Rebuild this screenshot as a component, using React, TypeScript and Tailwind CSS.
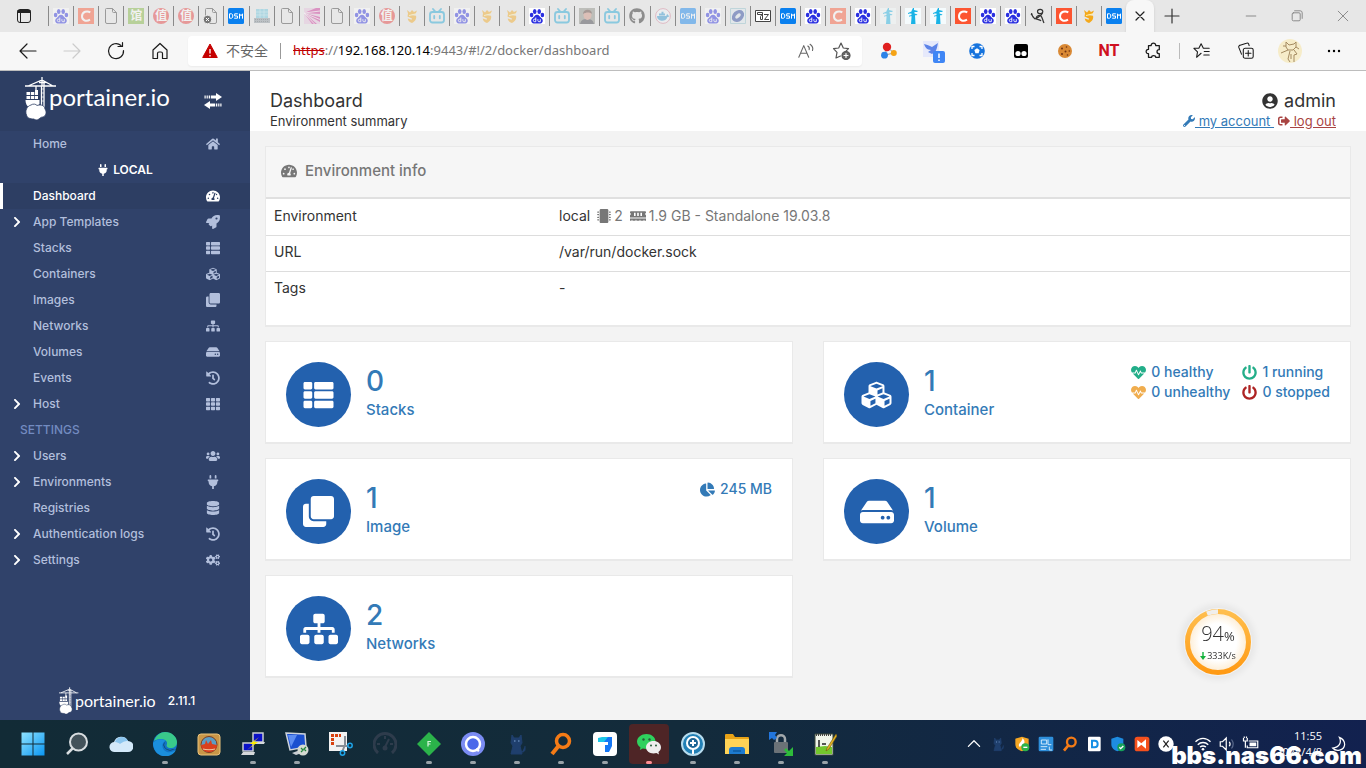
import { ReactNode } from "react";
import {
  FaChartPie,
  FaChevronRight,
  FaClone,
  FaCogs,
  FaCubes,
  FaDatabase,
  FaGithub,
  FaHdd,
  FaHeartbeat,
  FaHistory,
  FaHome,
  FaMemory,
  FaMicrochip,
  FaPlug,
  FaPowerOff,
  FaRocket,
  FaSignOutAlt,
  FaSitemap,
  FaTachometerAlt,
  FaTh,
  FaThList,
  FaUserCircle,
  FaUsers,
  FaWrench,
} from "react-icons/fa";

/* ---------- favicons ---------- */

function Paw() {
  return (
    <svg viewBox="0 0 16 16" className="h-4 w-4 bg-white">
      <g fill="#2a2fe0">
        <ellipse cx="2.6" cy="7" rx="1.8" ry="2.3" />
        <ellipse cx="5.7" cy="3.4" rx="1.8" ry="2.5" />
        <ellipse cx="10.2" cy="3.4" rx="1.8" ry="2.5" />
        <ellipse cx="13.4" cy="7" rx="1.8" ry="2.3" />
        <path d="M8 6.8c2.200 0 2.800 2 4.200 3.100 1.500 1.100 1.900 2.400 1.400 3.900-.6 1.700-2.500 2-5.600 1.700-3.100.3-5 0-5.600-1.700-.5-1.500-.1-2.800 1.400-3.900C5.200 8.800 5.800 6.800 8 6.800z" />
      </g>
      <path
        d="M6.800 9.500v4.200H5.600a1.200 1.200 0 0 1 0-2.500h1.200M8.900 11.200v1.500c0 .8.500 1 1 1h1.400v-2.500"
        fill="none"
        stroke="#fff"
        strokeWidth=".9"
      />
    </svg>
  );
}

function Csdn() {
  return (
    <span className="grid h-4 w-4 place-items-center bg-[#fc5531]">
      <svg viewBox="0 0 16 16" className="h-4 w-4" fill="none" stroke="#fff" strokeWidth="2">
        <path d="M12.300 4.400C9.500 2.600 4.200 3.200 4 8.100c-.1 4.800 4.600 5.600 8 3.600" />
      </svg>
    </span>
  );
}

function Doc({ broken }: { broken?: boolean }) {
  return (
    <svg viewBox="0 0 16 16" className="h-4 w-4" fill="none" stroke="#9a9a9a">
      <path d="M3.500.5h6l4 4.200v9.300a1.500 1.500 0 0 1-1.500 1.500H4A1.500 1.500 0 0 1 2.500 14V1.500a1 1 0 0 1 1-1z" />
      <path d="M9.500.5v3a1 1 0 0 0 1 1h3" />
      {broken && (
        <>
          <circle cx="4.500" cy="11.500" r="4.200" fill="#777" stroke="#e7e7e7" />
          <path d="M3 10l3 3M6 10l-3 3" stroke="#fff" />
        </>
      )}
    </svg>
  );
}

function Guan() {
  return (
    <span className="grid h-4 w-4 place-items-center bg-[#7fb53c] text-xs leading-4 font-bold text-white">
      馆
    </span>
  );
}

function Zhi() {
  return (
    <span className="grid h-4 w-4 place-items-center rounded-full bg-[#e63a3a] text-xs leading-4 font-bold text-white">
      值
    </span>
  );
}

function Dsm() {
  return (
    <svg viewBox="0 0 16 16" className="h-4 w-4" fill="none" stroke="#fff">
      <rect width="16" height="16" rx="1.500" fill="#0a80ef" stroke="none" />
      <path d="M1.500 5.800h2.200l1 1v2.400l-1 1H1.500zM9.800 5.800H6.700V8h2.800v2.200H6.200M11.500 10.700V5.800l1.500 2 1.500-2v4.900" />
    </svg>
  );
}

function Server() {
  return (
    <svg viewBox="0 0 16 16" className="h-4 w-4">
      <path d="M2 1h12v9H2z" fill="#6cc4dd" />
      <path d="M2 4h12M2 7h12M6 1v9M10 1v9" stroke="#c6edf5" strokeWidth=".6" />
      <path d="M0 10h16v5H0z" fill="#8a949c" />
      <path d="M1 11.500h14M1 13.500h14" stroke="#59636b" strokeDasharray="1 1" />
    </svg>
  );
}

function Fan() {
  return (
    <svg viewBox="0 0 16 16" className="h-4 w-4">
      <path d="M0 0h16v16H0z" fill="#e6c3dd" />
      <path d="M0 5L12 0h4v6L0 5zM0 5l16 4v5L0 5zM0 5l13 11H8L0 5z" fill="#cc2f97" />
      <path d="M0 5L16 3M0 5l16 6.500M0 5l10.500 11" stroke="#fff" strokeWidth=".8" />
    </svg>
  );
}

function Gold() {
  return (
    <svg viewBox="0 0 16 16" className="h-4 w-4" fill="#f4a91c">
      <path d="M3 2l3 2.500L8 2l2 2 3-1.500-1.500 3.500L6.800 7l5.200.8C13 11 10.500 14 8 15c-2.500-.7-4.200-2.500-4.200-4.500l3.800 1.300L8 10.500 3.500 8.600 4 5.500z" />
      <path d="M5 7.500l7-1.700" stroke="#fff3b0" />
    </svg>
  );
}

function Bili() {
  return (
    <svg viewBox="0 0 16 16" className="h-4 w-4" fill="none" stroke="#1aa5d6" strokeWidth="1.800">
      <rect x="1" y="4" width="14" height="10.500" rx="2.500" />
      <path d="M4 1l2.500 2.800M12 1L9.500 3.800M5.200 8v2.300M10.800 8v2.300" strokeLinecap="round" />
    </svg>
  );
}

function Photo() {
  return (
    <svg viewBox="0 0 16 16" className="h-4 w-4">
      <path d="M0 0h16v16H0z" fill="#8b8d84" />
      <path d="M1 16c1-4 3-5 7-5s6 1 7 5z" fill="#3b3d44" />
      <ellipse cx="8.500" cy="7" rx="4" ry="5" fill="#cf8f7e" />
      <path d="M4 6c0-5 9-6 9 0-2-2-6-2-9 0z" fill="#5a3e36" />
    </svg>
  );
}

function Whale() {
  return (
    <svg viewBox="0 0 16 16" className="h-4 w-4">
      <circle cx="8" cy="8" r="7.400" fill="#eef5f9" stroke="#d7849b" />
      <path d="M2 8h8.500c1 0 1.500-1 1.400-2 1 .3 1.300 1 1.200 1.600.6 0 1 .1 1.400.4-.5.8-1.400 1-2 1C11.500 12 9 13 6.500 12.800 3.800 12.600 2 10.800 2 8z" fill="#2d95cf" />
      <path d="M4 5.500h6v2H4zM6.500 3.800h2v2h-2z" fill="#2d95cf" />
    </svg>
  );
}

function Planet() {
  return (
    <svg viewBox="0 0 16 16" className="h-4 w-4">
      <path d="M.5.500h15v15H.5z" fill="#dce8ee" stroke="#8fc1cb" />
      <ellipse cx="8" cy="8" rx="5" ry="3.500" transform="rotate(-42 8 8)" fill="none" stroke="#24409c" strokeWidth="3.500" />
    </svg>
  );
}

function SevenZip() {
  return (
    <svg viewBox="0 0 16 16" className="h-4 w-4" fill="none" stroke="#444">
      <path d="M.5 2.500h15v11H.5z" fill="#fff" />
      <path d="M2.500 4.500h5v7h-2v-3l1.500-2H2.500zM9 6.500h4.500L9.500 11.500h4.500" />
    </svg>
  );
}

function Pagoda() {
  return (
    <svg viewBox="0 0 16 16" className="h-4 w-4">
      <path d="M0 0h16v16H0z" fill="#f5fbfd" />
      <path
        d="M8 0h1v2l4 1-1 1H9.500v1.500l3 1-1 .8H10L10.500 16H6l.6-7.700H5l-1 .5v-1L6.500 7V5.500H4.500L3 6V5l3.500-1.500V3z"
        fill="#19b3e6"
      />
    </svg>
  );
}

function Script() {
  return (
    <svg viewBox="0 0 16 16" className="h-4 w-4" fill="none" stroke="#333" strokeWidth="1.200">
      <path d="M1.500 5c.5 3 2 5 3.500 6M5 11C7 10 13 7 12.800 3.500 12.500.5 7.500 1 7.500 3.500c0 2.500 4 3 5.300.5M6 10c1-3 3.500-3 5-2 1.500 1.500 1.500 4 3 7M6 11c2 1 4 0 5 2M1 6l4 5" />
    </svg>
  );
}

const tabs: [() => ReactNode, boolean][] = [
  [Paw, true], [Csdn, true], [Doc, false], [Guan, true], [Zhi, true], [Zhi, true],
  [() => <Doc broken />, false], [Dsm, false], [Server, true], [Doc, false], [Fan, true],
  [Doc, false], [Paw, true], [Zhi, true], [Gold, true], [Bili, true], [Paw, true],
  [Gold, true], [Gold, true], [Paw, false], [Bili, true], [Photo, true], [Bili, true],
  [() => <FaGithub className="h-4 w-4 text-[#222]" />, true], [Whale, true], [Dsm, true],
  [Paw, true], [Planet, true], [SevenZip, false], [Dsm, false], [Paw, false], [Csdn, true],
  [Paw, false], [Pagoda, true], [Pagoda, false], [Pagoda, false], [Csdn, false],
  [Paw, false], [Paw, false], [Script, false], [Csdn, false], [Gold, false], [Dsm, false],
];

/* ---------- browser chrome ---------- */

function Line({ children, className = "h-5 w-5" }: { children: ReactNode; className?: string }) {
  return (
    <svg
      viewBox="0 0 20 20"
      className={className}
      fill="none"
      stroke="currentColor"
      strokeWidth="1.200"
      strokeLinecap="round"
      strokeLinejoin="round"
    >
      {children}
    </svg>
  );
}

function TabStrip() {
  return (
    <div className="flex h-8 items-stretch bg-[#e7e7e7]">
      <button className="grid w-12 shrink-0 place-items-center text-[#222]" aria-label="Tab actions">
        <svg viewBox="0 0 16 16" className="h-4 w-4" fill="none" stroke="currentColor">
          <rect x="1.500" y="1.500" width="13" height="13" rx="2.500" />
          <path d="M1.500 3.500h13M1.500 4.500h13M1.500 2.500h13M4.500 5v9" />
        </svg>
      </button>
      <div className="flex min-w-0 flex-1 items-center">
        {tabs.map(([Icon, faded], i) => (
          <button key={i} className="flex h-5 min-w-0 flex-1 items-center justify-center border-l border-[#8a8a8a]" aria-label="Tab">
            <span className={faded ? "opacity-45" : ""}>
              <Icon />
            </span>
          </button>
        ))}
      </div>
      <button className="grid w-7 shrink-0 place-items-center rounded-t-lg bg-[#f7f7f7] text-[#222] shadow" aria-label="Close tab">
        <Line className="h-4 w-4">
          <path d="M5 5l10 10M15 5L5 15" strokeWidth="1.500" />
        </Line>
      </button>
      <button className="grid w-9 shrink-0 place-items-center text-[#333]" aria-label="New tab">
        <Line>
          <path d="M3 10h14M10 3v14" />
        </Line>
      </button>
      <div className="flex w-44 shrink-0 items-center justify-end text-[#888]">
        <button className="grid w-[46px] place-items-center" aria-label="Minimize">
          <Line className="h-4 w-4"><path d="M4 10h12" /></Line>
        </button>
        <button className="grid w-[46px] place-items-center" aria-label="Restore">
          <Line className="h-4 w-4">
            <rect x="4" y="6" width="10" height="10" rx="1.500" />
            <path d="M7 3.500h7a2.500 2.500 0 0 1 2.500 2.500v7" />
          </Line>
        </button>
        <button className="grid w-[46px] place-items-center" aria-label="Close">
          <Line className="h-4 w-4"><path d="M4 4l12 12M16 4L4 16" /></Line>
        </button>
      </div>
    </div>
  );
}

function ToolButton({ children, label }: { children: ReactNode; label: string }) {
  return (
    <button className="grid w-11 shrink-0 place-items-center" aria-label={label}>
      {children}
    </button>
  );
}

function Toolbar() {
  return (
    <div className="flex h-[39px] items-center border-b border-[#bdbdbd] bg-[#f7f7f7] pr-[10px] pl-[6px] text-[#1b1b1b]">
      <ToolButton label="Back">
        <Line><path d="M18 10H2M9 3l-7 7 7 7" /></Line>
      </ToolButton>
      <ToolButton label="Forward">
        <Line className="h-5 w-5 text-[#ccc]"><path d="M2 10h16M11 3l7 7-7 7" /></Line>
      </ToolButton>
      <ToolButton label="Refresh">
        <Line><path d="M17.500 9.500A7.500 7.500 0 1 1 15 4.500M12 5.500h4.500V1.500" /></Line>
      </ToolButton>
      <ToolButton label="Home">
        <Line>
          <path d="M3 9l7-6.500L17 9v8.500h-4.500v-5a1.500 1.500 0 0 0-1.500-1.500H9a1.500 1.500 0 0 0-1.500 1.500v5H3z" />
        </Line>
      </ToolButton>
      <div className="ml-[6px] flex h-[30px] min-w-0 flex-1 items-center rounded bg-white pr-[2px] pl-[14px] font-['Noto_Sans','Noto_Sans_CJK_SC',sans-serif] text-[13px] shadow-xs">
        <svg viewBox="0 0 16 16" className="h-4 w-4 shrink-0">
          <path d="M8 1l7.300 13.500H.7z" fill="#c50000" stroke="#c50000" strokeLinejoin="round" />
          <path d="M8 6v4.500M8 12v1.500" stroke="#fff" strokeWidth="1.300" />
        </svg>
        <span className="ml-2 shrink-0 text-sm text-[#666]">不安全</span>
        <span className="mx-3 h-4 w-px shrink-0 bg-[#999]" />
        <span className="min-w-0 flex-1 truncate text-[#777]">
          <span className="text-[#c00000] line-through">https</span>://
          <span className="text-black">192.168.120.14</span>:9443/#!/2/docker/dashboard
        </span>
        <button className="grid w-9 shrink-0 place-items-center text-[#666]" aria-label="Read aloud">
          <Line className="h-[18px] w-[18px]">
            <path d="M2 17L7.500 4 13 17M4 12.500h7M12 4.500c1.500 1 2 2.500 1.500 4M14.500 2.500c2.800 2 3.600 4.500 2.700 7" />
          </Line>
        </button>
        <button className="grid w-9 shrink-0 place-items-center text-[#555]" aria-label="Add to favorites">
          <Line>
            <path d="M8.500 15L4 17l1-5.700L1.500 7.600 6.700 7 9 2l2.300 5 5.200.6-3 3" />
            <circle cx="14" cy="14.500" r="4" fill="#666" />
            <path d="M12 14.500h4M14 12.500v4" stroke="#fff" />
          </Line>
        </button>
      </div>
      <div className="ml-[5px] flex shrink-0 items-center">
        <ToolButton label="Molecule">
          <svg viewBox="0 0 18 18" className="h-[18px] w-[18px]">
            <path d="M7 5l-2 8M7 5l7 6M5 13l9-2" stroke="#999" />
            <circle cx="7" cy="5" r="4.200" fill="#e02020" />
            <circle cx="4.500" cy="13.200" r="3.400" fill="#2c83e8" />
            <circle cx="13.800" cy="11" r="3" fill="#f4a316" />
          </svg>
        </ToolButton>
        <ToolButton label="Bird">
          <svg viewBox="0 0 24 24" className="h-6 w-6">
            <path d="M2 2h16v16H2z" fill="#e6e9fb" />
            <path d="M3 5c4 1 6 2 8 3l6-4c-1 4-1 9-6 11l-4-2 3-2C6 11 4 8 3 5z" fill="#5c83e8" />
            <rect x="12" y="12" width="12" height="12" rx="2" fill="#3f86f5" />
            <path d="M18 14.500v4.500M18 20.500V22" stroke="#fff" strokeWidth="1.500" />
          </svg>
        </ToolButton>
        <ToolButton label="Ball">
          <svg viewBox="0 0 16 16" className="h-4 w-4">
            <circle cx="8" cy="8" r="7.800" fill="#1673dd" />
            <path d="M3 6V3.500h2.500M10.500 3.500H13V6M3 10v2.500h2.500M10.500 12.500H13V10" fill="none" stroke="#fff" strokeWidth="1.300" />
            <path d="M8 5.200l2.600 1.900-1 3.100H6.400l-1-3.100z" fill="#fff" />
          </svg>
        </ToolButton>
        <ToolButton label="Userscripts">
          <svg viewBox="0 0 16 16" className="h-4 w-4">
            <rect x="1" y="1" width="14" height="14" rx="2" />
            <circle cx="5" cy="10.500" r="2.600" fill="#fff" />
            <circle cx="11" cy="10.500" r="2.600" fill="#fff" />
          </svg>
        </ToolButton>
        <ToolButton label="Cookies">
          <svg viewBox="0 0 16 16" className="h-4 w-4">
            <circle cx="8" cy="8" r="7" fill="#d98935" />
            <g fill="#6d3213">
              <circle cx="5" cy="5.500" r="1" />
              <circle cx="9.500" cy="4" r=".8" />
              <circle cx="8.500" cy="8.500" r="1" />
              <circle cx="12.300" cy="8" r=".8" />
              <circle cx="5" cy="11" r="1" />
              <circle cx="10.500" cy="12" r=".8" />
            </g>
          </svg>
        </ToolButton>
        <ToolButton label="NT">
          <span className="font-['Roboto',sans-serif] text-base leading-5 font-bold text-[#cf1020]">NT</span>
        </ToolButton>
        <ToolButton label="Extensions">
          <Line className="h-[18px] w-[18px]">
            <path d="M5 4h3c-.3-3.500 5.300-3.500 5 0h4v4.500c-3.400 0-3.400 4.500 0 4.500v4h-4c0-2.500-4.500-2.500-4.500 0H5v-4c-3.500.3-3.500-5 0-4.700z" strokeWidth="1.400" />
          </Line>
        </ToolButton>
        <span className="ml-1 h-4 w-px bg-[#bbb]" />
        <ToolButton label="Favorites">
          <Line className="h-[18px] w-[18px]">
            <path d="M9 12.500L4 17l1-6L1 7h5.500L9 2l2.500 5H18M12.500 10.500H18M12 14.500h6" />
          </Line>
        </ToolButton>
        <ToolButton label="Collections">
          <Line className="h-[18px] w-[18px]">
            <rect x="7" y="7" width="11" height="11" rx="2" />
            <path d="M5 13.500L2 6a2 2 0 0 1 1.500-2.500l7-2.200a2 2 0 0 1 2.500 1l.5 1.700M12.500 9.500v6M9.500 12.500h6" />
          </Line>
        </ToolButton>
        <ToolButton label="Profile">
          <svg viewBox="0 0 24 24" className="h-6 w-6" fill="none" stroke="#a48a60">
            <circle cx="12" cy="12" r="12" fill="#f6ecc9" stroke="none" />
            <path d="M8 3l3 3 5-1 2-2v5l-3 3H10L8 8zM10 11l-7 3M16 11l3 4-3 1v7M12 12l-2 8 2 3M13 15v5M5 7h3M18 8l3 2" />
          </svg>
        </ToolButton>
        <ToolButton label="More">
          <svg viewBox="0 0 16 16" className="h-4 w-4">
            <circle cx="3" cy="8" r="1.200" />
            <circle cx="8" cy="8" r="1.200" />
            <circle cx="13" cy="8" r="1.200" />
          </svg>
        </ToolButton>
      </div>
    </div>
  );
}

/* ---------- sidebar ---------- */

function Crane({ className }: { className: string }) {
  return (
    <svg viewBox="0 0 32 44" className={className} fill="none" stroke="#fff">
      <path d="M0 9h31M3 9l14-6 11 6M17 0v9M14 5.500h6" strokeWidth="1.300" />
      <path d="M16.500 9v22M19 5v26M11 9v6" strokeWidth="1.300" />
      <path d="M16.500 12h2.500M16.500 16h2.500M16.500 20h2.500M16.500 24h2.500" strokeWidth=".7" />
      <path d="M1.500 15h3.500v3H1.500zM5.800 15h3.500v3H5.800zM10 13h3v5h-3zM1.500 19h3.500v3H1.500zM5.800 19h3.500v3H5.800zM10 19h3v3h-3z" fill="#fff" stroke="none" />
      <path d="M.5 23h14v4L12 30H4C1.500 29 .5 26 .5 23z" fill="#fff" stroke="none" />
      <path d="M6 28c2-1.500 5-1 6 .5 4-1.500 7.500 0 8 3.500 2 3 1 7-2 8-2 0-3 1-4 2-2 1.500-4 1-5 0-4 0-7-1-7.500-4C-.3 34 2 29 6 28z" fill="#fff" stroke="#2d3e63" strokeWidth=".8" />
    </svg>
  );
}

type MenuItem = { label: string; icon: ReactNode; expandable?: boolean; active?: boolean };

const environmentItems: MenuItem[] = [
  { label: "Dashboard", icon: <FaTachometerAlt />, active: true },
  { label: "App Templates", icon: <FaRocket />, expandable: true },
  { label: "Stacks", icon: <FaThList /> },
  { label: "Containers", icon: <FaCubes /> },
  { label: "Images", icon: <FaClone /> },
  { label: "Networks", icon: <FaSitemap /> },
  { label: "Volumes", icon: <FaHdd /> },
  { label: "Events", icon: <FaHistory /> },
  { label: "Host", icon: <FaTh />, expandable: true },
];

const settingsItems: MenuItem[] = [
  { label: "Users", icon: <FaUsers />, expandable: true },
  { label: "Environments", icon: <FaPlug />, expandable: true },
  { label: "Registries", icon: <FaDatabase /> },
  { label: "Authentication logs", icon: <FaHistory />, expandable: true },
  { label: "Settings", icon: <FaCogs />, expandable: true },
];

function SidebarItem({ item }: { item: MenuItem }) {
  return (
    <li>
      <a
        href="#"
        className={
          item.active
            ? "flex h-[26px] items-center border-l-3 border-white bg-[#2d3e63] pr-[22px] pb-px text-white"
            : "flex h-[26px] items-center border-l-3 border-transparent pr-[22px] pb-px text-[#b2bfdc]"
        }
      >
        <span className="flex w-[30px] pl-2 text-white">
          {item.expandable && <FaChevronRight className="h-3 w-3" />}
        </span>
        <span className="flex-1">{item.label}</span>
        <span className="grid w-[30px] place-items-center text-sm">{item.icon}</span>
      </a>
    </li>
  );
}

function Sidebar() {
  return (
    <aside className="flex w-[250px] shrink-0 flex-col bg-[#30426a] text-xs leading-5 font-medium">
      <div className="flex h-[60px] items-start bg-[#2d3e63] pt-[6px] pr-[27px] pl-[25px]">
        <Crane className="h-11 w-8 shrink-0" />
        <span className="-ml-2 flex-1 font-['Lato',sans-serif] text-2xl leading-10 font-normal text-white">portainer.io</span>
        <button className="mt-4 text-white" aria-label="Toggle sidebar">
          <svg viewBox="0 0 20 16" className="h-4 w-5" fill="currentColor">
            <path d="M13 0l6 4-6 4V5.500H8v-3h5zM1.500 2.500h1.200v3H1.500zM3.600 2.500h1.200v3H3.600zM5.700 2.500h1.500v3H5.700z" />
            <path d="M7 8l-6 4 6 4v-2.500h5v-3H7zM12.800 10.500h1.500v3h-1.500zM15.200 10.500h1.200v3h-1.200zM17.300 10.500h1.200v3h-1.200z" />
          </svg>
        </button>
      </div>
      <ul>
        <SidebarItem item={{ label: "Home", icon: <FaHome /> }} />
        <li className="flex h-[26px] items-center justify-center gap-1 pb-px font-semibold text-white">
          <FaPlug className="h-3 w-3" />
          LOCAL
        </li>
        {environmentItems.map((item) => (
          <SidebarItem key={item.label} item={item} />
        ))}
        <li className="flex h-[26px] items-center pb-px pl-5 text-[#738bc0]">SETTINGS</li>
        {settingsItems.map((item) => (
          <SidebarItem key={item.label} item={item} />
        ))}
      </ul>
      <div className="mt-auto flex items-center pb-[5px] pl-[59px] text-white">
        <Crane className="h-7 w-5" />
        <span className="-ml-1 font-['Lato',sans-serif] text-base leading-7 font-normal">portainer.io</span>
        <span className="ml-3">2.11.1</span>
      </div>
    </aside>
  );
}

/* ---------- dashboard ---------- */

function PageHeader() {
  return (
    <header className="flex h-[60px] justify-between bg-white pt-5 pr-[30px] pl-5 text-[#333]">
      <div>
        <h1 className="text-lg leading-5">Dashboard</h1>
        <p className="text-[13px] leading-5">Environment summary</p>
      </div>
      <div className="text-right">
        <p className="flex items-center justify-end gap-[6px] text-lg leading-5">
          <FaUserCircle className="h-4 w-4" />
          admin
        </p>
        <p className="flex gap-1 text-[13px] leading-5">
          <a href="#" className="flex items-center text-[#337ab7]">
            <FaWrench className="h-3 w-3" />
            <span className="whitespace-pre underline"> my account </span>
          </a>
          <a href="#" className="flex items-center text-[#a94442]">
            <FaSignOutAlt className="h-3 w-3" />
            <span className="whitespace-pre underline"> log out</span>
          </a>
        </p>
      </div>
    </header>
  );
}

function EnvironmentInfo() {
  return (
    <section className="border border-[#e9e9e9] border-b-2 bg-white">
      <h2 className="flex h-[52px] items-center gap-2 border-b-2 border-[#e0e0e0] bg-[#f6f6f6] px-[15px] pb-[2px] text-[15px] leading-5 font-medium text-[#777]">
        <FaTachometerAlt className="h-4 w-4" />
        Environment info
      </h2>
      <table className="mb-[18px] w-full text-left text-sm leading-5 text-[#333]">
        <tbody>
          <tr className="h-9 border-b border-[#ddd]">
            <td className="w-[285px] px-2 pb-[2px]">Environment</td>
            <td className="px-2 pb-[2px]">
              <div className="flex items-center">
                local
                <span className="ml-[7px] flex items-center gap-[3px] text-[#777]">
                  <FaMicrochip className="h-[14px] w-[14px]" />2
                  <FaMemory className="ml-1 h-[14px] w-4" />
                  1.9 GB - Standalone 19.03.8
                </span>
              </div>
            </td>
          </tr>
          <tr className="h-9 border-b border-[#ddd]">
            <td className="px-2 pb-[2px]">URL</td>
            <td className="px-2 pb-[2px]">/var/run/docker.sock</td>
          </tr>
          <tr className="h-9">
            <td className="px-2 pb-[2px]">Tags</td>
            <td className="px-2 pb-[2px]">-</td>
          </tr>
        </tbody>
      </table>
    </section>
  );
}

type CardProps = { icon: ReactNode; count: number; label: string; children?: ReactNode };

function Card({ icon, count, label, children }: CardProps) {
  return (
    <a href="#" className="flex h-[103px] border border-[#e9e9e9] border-b-2 bg-white p-5 font-medium text-[#337ab7]">
      <span className="grid h-[65px] w-[65px] shrink-0 place-items-center rounded-full bg-[#2361ae] text-white">
        {icon}
      </span>
      <div className="ml-[15px] flex-1">
        <p className="text-[28px] leading-[38px]">{count}</p>
        <p className="text-[15px] leading-5">{label}</p>
      </div>
      {children}
    </a>
  );
}

function Dashboard() {
  return (
    <main className="min-w-0 flex-1 bg-[#f3f3f3]">
      <PageHeader />
      <div className="p-[15px]">
        <EnvironmentInfo />
        <div className="mt-[14px] grid grid-cols-2 gap-x-[30px] gap-y-[14px]">
          <Card icon={<FaThList className="h-[30px] w-[31px]" />} count={0} label="Stacks" />
          <Card icon={<FaCubes className="h-[30px] w-[31px]" />} count={1} label="Container">
            <div className="grid h-10 grid-cols-[auto_auto] gap-x-3 text-sm leading-5">
              <span className="flex items-center gap-[5px]">
                <FaHeartbeat className="h-[15px] w-[15px] text-[#23ae89]" />0 healthy
              </span>
              <span className="flex items-center gap-[5px]">
                <FaPowerOff className="h-[15px] w-[15px] text-[#23ae89]" />1 running
              </span>
              <span className="flex items-center gap-[5px]">
                <FaHeartbeat className="h-[15px] w-[15px] text-[#f0ad4e]" />0 unhealthy
              </span>
              <span className="flex items-center gap-[5px]">
                <FaPowerOff className="h-[15px] w-[15px] text-[#ae2323]" />0 stopped
              </span>
            </div>
          </Card>
          <Card icon={<FaClone className="h-[31px] w-[31px]" />} count={1} label="Image">
            <span className="flex h-5 items-center gap-[5px] text-sm leading-5">
              <FaChartPie className="h-[15px] w-[15px]" />
              245 MB
            </span>
          </Card>
          <Card icon={<FaHdd className="h-[34px] w-[34px]" />} count={1} label="Volume" />
          <Card icon={<FaSitemap className="h-[32px] w-[38px]" />} count={2} label="Networks" />
        </div>
      </div>
    </main>
  );
}

// floating memory / network meter
function SpeedBall() {
  return (
    <div className="fixed right-[114px] bottom-[92px] grid h-[68px] w-[68px] place-items-center rounded-full shadow-[0_0_6px_4px_rgba(0,0,0,0.05)]">
      <svg viewBox="0 0 68 68" className="absolute h-[68px] w-[68px]">
        <defs>
          <radialGradient id="ball">
            <stop offset="0.600" stopColor="#fff" />
            <stop offset="1" stopColor="#fdebcf" />
          </radialGradient>
          <linearGradient id="ring" x1="0" y1="0" x2="0" y2="1">
            <stop offset="0" stopColor="#ffbe4d" />
            <stop offset="1" stopColor="#ff9a14" />
          </linearGradient>
        </defs>
        <circle cx="34" cy="34" r="30.500" fill="url(#ball)" stroke="url(#ring)" strokeWidth="5" />
        <path d="M23 5.700A30.500 30.500 0 0 1 34 3.500" fill="none" stroke="#f1efec" strokeWidth="4.500" />
      </svg>
      <div className="relative pt-[2px] text-center font-['Open_Sans',sans-serif] text-[#333]">
        <p className="text-xl leading-6 font-light">
          94<span className="text-[13px] font-normal">%</span>
        </p>
        <p className="flex items-center gap-px text-[9px] leading-4">
          <svg viewBox="0 0 6 8" className="h-2 w-[6px]">
            <path d="M2.300 0h1.400v4H6L3 8 0 4h2.300z" fill="#12b23c" />
          </svg>
          333K/s
        </p>
      </div>
    </div>
  );
}

/* ---------- taskbar ---------- */

function Ico({ children, className = "h-6 w-6" }: { children: ReactNode; className?: string }) {
  return (
    <svg viewBox="0 0 24 24" className={className} fill="none">
      {children}
    </svg>
  );
}

const cat = (
  <>
    <path d="M7 3l2 3h5l2-3 1 8-2 3 2 8H6l2-8-2-3zM17 20c4 0 3-4 3-6" fill="#1f3f6d" stroke="#1f3f6d" />
    <path d="M9 9h1.500M13 9h1.500" stroke="#7fa6d8" strokeWidth="1.200" />
  </>
);

const search = (
  <>
    <circle cx="14" cy="9" r="6.500" stroke="#f47b16" strokeWidth="3.500" />
    <path d="M9.500 14L3 22" stroke="#f47b16" strokeWidth="4" />
  </>
);

const apps: { name: string; running?: boolean; hot?: boolean; icon: ReactNode }[] = [
  {
    name: "Start",
    icon: (
      <>
        <defs>
          <linearGradient id="win" x1="0" y1="0" x2="1" y2="1">
            <stop offset="0" stopColor="#8fe3ff" />
            <stop offset="1" stopColor="#0a96f2" />
          </linearGradient>
        </defs>
        <path d="M.500.500h11v11H.5zM12.500.500h11v11h-11zM.5 12.500h11v11H.5zM12.500 12.500h11v11h-11z" fill="url(#win)" />
      </>
    ),
  },
  {
    name: "Search",
    icon: (
      <>
        <circle cx="13.500" cy="10" r="8.500" stroke="#d8dde0" strokeWidth="2" fill="#43525a" />
        <path d="M7.500 16.500L2 22" stroke="#d8dde0" strokeWidth="2.500" />
      </>
    ),
  },
  {
    name: "Cloud",
    icon: (
      <>
        <path d="M6 20a5 5 0 0 1-1-10 7.500 7.500 0 0 1 14-1 5.500 5.500 0 0 1 0 11z" fill="#d3e9fa" />
        <path d="M6 10a7 7 0 0 1 13-1c-4 0-5 1-8 3-1-1-3-2-5-2z" fill="#8cc6ef" />
      </>
    ),
  },
  {
    name: "Edge",
    running: true,
    icon: (
      <>
        <circle cx="12" cy="12" r="12" fill="#1173c7" />
        <path d="M1 9C3 3 8 0 12 0c7 0 12 5 12 10 0 4-3 6-6 6-4 0-5-2-4-4 1-4-6-7-13-3z" fill="#39c98a" />
        <path d="M0 11C3 7 9 6 13 9c-4 0-6 8 1 11 4 1 7-1 9-2-4 8-15 8-20 2-2-3-3-6-3-9z" fill="#1b8fdd" />
        <path d="M13 9c-3 2-3 8 4 9l5-1c-3 2-8 2-10-1-2-2-2-5 1-7z" fill="#122c38" />
      </>
    ),
  },
  {
    name: "Game",
    icon: (
      <>
        <rect x="1" y="2" width="22" height="21" rx="3" fill="#c99748" stroke="#e9c37c" />
        <circle cx="12" cy="12.500" r="8" fill="#5c9dc4" stroke="#7d3b1c" />
        <path d="M4 13l4-1 1-4 2 4 3-4 1 4 5 1c0 9-15 10-16 0z" fill="#da401c" />
        <path d="M6 17c4 1 8 1 12 0" stroke="#f0c7a0" />
      </>
    ),
  },
  {
    name: "PuTTY",
    running: true,
    icon: (
      <>
        <path d="M12 1h10v9H12zM2 11h10v8H2z" fill="#0a10c8" stroke="#c9cdd0" strokeWidth="1.500" />
        <path d="M10 12h13l1-2H12zM0 23h13l1-3H2z" fill="#d5d8da" />
        <path d="M18 5l-9 7h4l-7 6 11-8h-4z" fill="#ffee00" />
      </>
    ),
  },
  {
    name: "Remote Desktop",
    running: true,
    icon: (
      <>
        <path d="M1 1l19 1 1 13-16 3z" fill="#1a4fd0" stroke="#cdd3da" strokeWidth="1.500" />
        <path d="M3 3l9 0-6 12z" fill="#5d8df2" />
        <path d="M7 21l8-3 2 3-6 2z" fill="#c8cdd2" />
        <circle cx="18" cy="18" r="5.500" fill="#d5d9d2" />
        <path d="M16 16l2 2-2 2M21 15l-2 2 2 2" stroke="#23853b" strokeWidth="1.300" />
      </>
    ),
  },
  {
    name: "Screenshot",
    icon: (
      <>
        <path d="M0 0h18v19H0z" fill="#f2f2f2" />
        <path d="M3.500 13V3.500H12" stroke="#d8410f" strokeWidth="3" strokeDasharray="3 1" />
        <path d="M7 14h9V4M15.500 14l-2 5M15.500 14h4" stroke="#888e96" strokeWidth="2" />
        <circle cx="21" cy="13.500" r="2.200" stroke="#1ea4e8" strokeWidth="1.500" />
        <circle cx="13.500" cy="21" r="2.200" stroke="#1ea4e8" strokeWidth="1.500" />
      </>
    ),
  },
  {
    name: "Gauge",
    icon: (
      <>
        <path d="M5 21A11 11 0 1 1 19 21" stroke="#2e3c4c" strokeWidth="3" />
        <path d="M12 15l4-8M4 12h3M17 12h3M12 4v3" stroke="#2e3c4c" strokeWidth="2" />
        <circle cx="12" cy="16" r="2.500" fill="#2e3c4c" />
      </>
    ),
  },
  {
    name: "FeiQ",
    running: true,
    icon: (
      <>
        <path d="M12 0l12 12-12 12L0 12z" fill="#2bb34a" />
        <path d="M11 14.500v-5h3M11 12h2.500" stroke="#d8f5dd" strokeWidth="1.200" />
      </>
    ),
  },
  {
    name: "Quark",
    running: true,
    icon: (
      <>
        <circle cx="12" cy="12" r="12" fill="#7b8cf3" />
        <circle cx="12" cy="12" r="7" stroke="#fff" strokeWidth="2.500" fill="#4b69ea" />
        <path d="M15 17l3 2" stroke="#fff" strokeWidth="2.500" />
      </>
    ),
  },
  { name: "Cat", running: true, icon: cat },
  { name: "Everything", running: true, icon: search },
  {
    name: "Todesk",
    running: true,
    icon: (
      <>
        <rect width="24" height="24" rx="4" fill="#fff" />
        <path d="M9 5h10v9l-3 6h-4v-7h3V10H9z" fill="#1476f5" />
        <path d="M5 6l4-1h6l-4 5H5z" fill="#1cc8e8" />
      </>
    ),
  },
  {
    name: "WeChat",
    running: true,
    hot: true,
    icon: (
      <>
        <path d="M9.500 2C4.500 2 0 5.200 0 9.500c0 2.500 1.400 4.600 3.500 6L2.800 18l3-1.500c1 .3 2.300.5 3.700.5 5 0 9-3.200 9-7.500S14.500 2 9.500 2z" fill="#2fd15e" />
        <path d="M16.500 9c-4 0-7.500 2.600-7.500 6.200s3.500 6.200 7.500 6.200c1 0 2-.2 2.900-.5L22 22.500l-.6-2.500c1.600-1.100 2.600-2.800 2.600-4.800C24 11.600 20.500 9 16.500 9z" fill="#eee" />
        <g fill="#285b39">
          <circle cx="6.500" cy="7.500" r="1.200" />
          <circle cx="12.500" cy="7.500" r="1.200" />
          <circle cx="14" cy="13.500" r="1" />
          <circle cx="19" cy="13.500" r="1" />
        </g>
      </>
    ),
  },
  {
    name: "Magnify",
    running: true,
    icon: (
      <>
        <circle cx="12" cy="12" r="11" fill="#2180b6" stroke="#b6dcee" strokeWidth="2" />
        <circle cx="12" cy="11" r="6" fill="#1d6595" stroke="#fff" strokeWidth="2" />
        <path d="M12 8v6M9 11h6M12 17v5" stroke="#fff" strokeWidth="2" />
      </>
    ),
  },
  {
    name: "Explorer",
    running: true,
    icon: (
      <>
        <path d="M0 3a1 1 0 0 1 1-1h7l2 3h13a1 1 0 0 1 1 1v16H0z" fill="#e8a317" />
        <path d="M0 7h24v15H0z" fill="#ffd356" />
        <path d="M4 22v-4a3 3 0 0 1 3-3h10a3 3 0 0 1 3 3v4z" fill="#1d7bd0" />
        <path d="M8 19h8" stroke="#0e5ba3" strokeWidth="1.500" />
      </>
    ),
  },
  {
    name: "Lock",
    running: true,
    icon: (
      <>
        <path d="M8 12V7c0-5 8-5 8 0v5" stroke="#a2a8ac" strokeWidth="2.500" />
        <rect x="5" y="10" width="14" height="11" rx="1" fill="#6b7277" />
        <path d="M0 0h8L6 3l2 3-3 2-2-2-3 2z" fill="#2276dd" />
        <path d="M24 15v9h-9l3-3-3-3 2-2 3 3z" fill="#2ebc3a" />
      </>
    ),
  },
  {
    name: "Notepad++",
    running: true,
    icon: (
      <>
        <path d="M2 2h18v21H2z" fill="#f1f5ea" stroke="#3c4b3a" />
        <path d="M3 15l9-1 7 1v7H3z" fill="#73c72d" />
        <path d="M3 3h16" stroke="#444" strokeWidth="2" strokeDasharray="1 1" />
        <path d="M6 8v7M9 12h4" stroke="#222" strokeWidth="1.500" />
        <path d="M23 2l-9 14-1 3 3-2L24 4z" fill="#e4b323" stroke="#705510" strokeWidth=".6" />
      </>
    ),
  },
];

const tray: ReactNode[] = [
  cat,
  <>
    <path d="M12 1l10 3v8c0 6-4 9-10 11C6 21 2 18 2 12V4z" fill="#f5a623" />
    <path d="M13 3c5 6 2 8 1 11l-6 2c-3-5 4-6 5-13z" fill="#fff" />
    <circle cx="17" cy="17" r="6" fill="#2cb34a" />
    <path d="M14 17h6" stroke="#fff" strokeWidth="2" />
  </>,
  <>
    <rect x="1" y="1" width="22" height="22" rx="2" fill="#2e8fdb" />
    <path d="M5 6h8v6H5zM15 5v8h5M4 16h10M4 20h8M17 16v5h4" stroke="#e5f4ff" strokeWidth="1.300" />
  </>,
  search,
  <>
    <rect x="3" y="1" width="19" height="22" rx="2" fill="#fff" />
    <path d="M9 7h4c6 0 6 10 0 10H9z" stroke="#168fe5" strokeWidth="3" />
  </>,
  <>
    <path d="M11 1l9 3v8c0 6-4 9-9 11-5-2-9-5-9-11V4z" fill="#1e8ce0" />
    <circle cx="17" cy="17" r="6" fill="#15a05a" />
    <path d="M14 17l2 2 4-4" stroke="#fff" strokeWidth="2" />
  </>,
  <>
    <rect x="1" y="1" width="22" height="22" rx="4" fill="#f4501d" />
    <path d="M5 6l6 5 7-6v14l-7-6-6 5z" fill="#fff" />
  </>,
  <>
    <circle cx="12" cy="12" r="11.500" fill="#fff" />
    <path d="M8 7l8 10M16 7L8 17" stroke="#222" strokeWidth="1.800" />
  </>,
];

function Taskbar() {
  return (
    <footer className="relative flex h-12 shrink-0 items-center bg-linear-to-r from-[#122b36] via-[#132b3b] to-[#12214f] pl-[11px] font-['Open_Sans',sans-serif] text-white">
      {apps.map((app) => (
        <button
          key={app.name}
          aria-label={app.name}
          className="relative grid h-10 w-11 place-items-center"
        >
          <span
            className={
              app.hot
                ? "grid h-10 w-10 place-items-center rounded bg-[#4e2526]"
                : "grid h-10 w-10 place-items-center"
            }
          >
            <Ico>{app.icon}</Ico>
          </span>
          {app.running && (
            <span
              className={
                app.hot
                  ? "absolute bottom-0 h-[3px] w-[6px] rounded-full bg-[#ff8f95]"
                  : "absolute bottom-0 h-[3px] w-[6px] rounded-full bg-[#98a2a8]"
              }
            />
          )}
        </button>
      ))}
      <div className="ml-auto flex items-center pr-5">
        <button className="grid w-6 place-items-center" aria-label="Show hidden icons">
          <Line className="h-4 w-4"><path d="M3 13l7-7 7 7" strokeWidth="1.600" /></Line>
        </button>
        {tray.map((icon, i) => (
          <button key={i} className="grid w-6 place-items-center" aria-label="Tray icon">
            <Ico className="h-4 w-4">{icon}</Ico>
          </button>
        ))}
        <div className="ml-4 flex w-[66px] justify-between">
          <Ico className="h-[18px] w-[18px]">
            <path d="M2 9c6-6 14-6 20 0M5 13c4-4 10-4 14 0M8 16c3-2 5-2 8 0" stroke="#fff" strokeWidth="1.800" />
            <circle cx="12" cy="19" r="1.800" fill="#fff" />
          </Ico>
          <Ico className="h-[18px] w-[18px]">
            <path d="M3 9h3l5-5v16l-5-5H3zM15 9c1.500 2 1.500 4 0 6" stroke="#fff" strokeWidth="1.600" />
            <path d="M18 6c3 4 3 8 0 12" stroke="#5a6a8c" strokeWidth="1.600" />
          </Ico>
          <Ico className="h-[18px] w-[18px]">
            <path d="M9 8h12v9H7v-3M2 4v4h5V4M3 2v2M6 2v2M4.500 8v9" stroke="#fff" strokeWidth="1.600" />
            <path d="M10 10h9v5h-9z" fill="#fff" />
          </Ico>
        </div>
        <p className="w-[62px] text-right text-[11px] leading-4">
          11:55
          <br />
          2022/4/8
        </p>
        <Ico className="ml-2 h-4 w-4">
          <path d="M14 2c4 8 0 15-10 16 5 6 17 4 18-5 0-5-3-9-8-11z" stroke="#fff" strokeWidth="1.800" />
        </Ico>
      </div>
      <span className="absolute right-1 bottom-0 font-['Inter',sans-serif] text-2xl leading-6 font-black">
        bbs.nas66.com
      </span>
    </footer>
  );
}

export default function App() {
  return (
    <div className="flex min-h-screen flex-col font-['Inter','Noto_Sans_CJK_SC',sans-serif]">
      <TabStrip />
      <Toolbar />
      <div className="flex flex-1">
        <Sidebar />
        <Dashboard />
      </div>
      <Taskbar />
      <SpeedBall />
    </div>
  );
}
